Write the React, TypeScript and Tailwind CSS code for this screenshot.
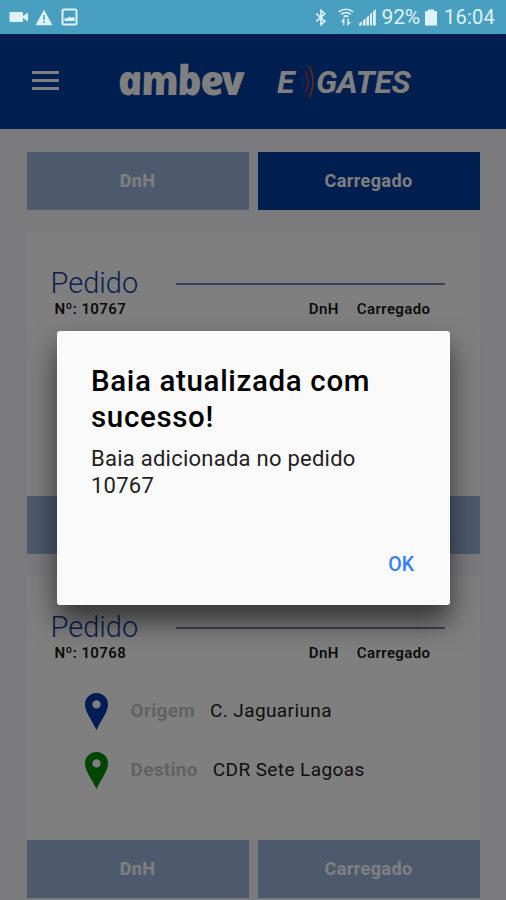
import { FC, ReactNode } from "react"
import clsx from "clsx"

type Place = {
  label: string
  name: string
  pinClass: string
}

type Order = {
  id: number
  places: Place[]
}

const orders: Order[] = [
  { id: 10767, places: [] },
  {
    id: 10768,
    places: [
      {
        label: "Origem",
        name: "C. Jaguariuna",
        pinClass: "text-[#0038a8]",
      },
      {
        label: "Destino",
        name: "CDR Sete Lagoas",
        pinClass: "text-[#008a00]",
      },
    ],
  },
]

const StatusBar: FC = () => (
  <div className="relative z-20 flex h-[34px] items-center bg-[#489fbf] text-[#e0f2f9]">
    <svg className="ml-[9px] h-4 w-5" viewBox="0 0 20 16" fill="currentColor">
      <rect x="0.5" y="3" width="13.5" height="10" rx="1" />
      <path d="M14 7l5-3.500v9l-5-3.500z" />
    </svg>
    <svg className="ml-[6px] h-[17px] w-[18px]" viewBox="0 0 18 17">
      <path d="M9 .8l8.500 15.400H.5z" fill="currentColor" />
      <path d="M9 6v5M9 12.300v1.700" stroke="#489fbf" strokeWidth="1.600" />
    </svg>
    <svg
      className="ml-[8px] h-[18px] w-[17px]"
      viewBox="0 0 17 18"
      fill="none"
      stroke="currentColor"
      strokeWidth="2"
    >
      <rect x="1.500" y="1.500" width="14" height="15" rx="1.500" />
      <path
        d="M3.500 13V10l2.500.4 2.500-2 1.500 1.400 3.500-.8v4z"
        fill="currentColor"
        stroke="none"
      />
    </svg>

    <div className="ml-auto flex items-center pr-[11px] font-['Roboto',sans-serif] text-[20px]">
      <svg
        className="mr-[11px] h-[17px] w-3"
        viewBox="0 0 12 18"
        fill="none"
        stroke="currentColor"
        strokeWidth="1.800"
      >
        <path d="M1 5l9 8-4 3.500v-15L10 5l-9 8" />
      </svg>
      <svg
        className="mr-[5px] h-[18px] w-[16px]"
        viewBox="0 0 16 18"
        fill="none"
        stroke="currentColor"
        strokeWidth="1.700"
      >
        <path d="M.8 3.800C5 .4 11 .4 15.200 3.800M3.300 6.300c2.700-2.300 6.700-2.300 9.400 0M5.700 8.800c1.400-1.200 3.200-1.200 4.600 0" />
        <path
          d="M5.500 17v-3.500h-2.200l2.700-3v6.500zM10.300 11v3.500h2.200l-2.700 3V11z"
          fill="currentColor"
          strokeWidth="0.800"
        />
      </svg>
      <svg className="h-[18px] w-[17px]" viewBox="0 0 17 18" fill="currentColor">
        <path d="M0 17.500v-2l3-2v4zM4 17.500v-5l2.500-2v7zM7.500 17.500v-8l2.500-2v10zM11 17.500V6l2-1.600v13.100zM14 17.500V3.500L16.800 1v16.500z" />
      </svg>
      <span className="ml-[6px] pt-[2px] text-[21px] tracking-[-0.2px]">92%</span>
      <svg className="ml-[5px] h-[17px] w-3" viewBox="0 0 12 17" fill="currentColor">
        <path d="M3 .5h6v1.500h3V16.500H0V2h3z" />
      </svg>
      <span className="ml-[7px] tracking-[0.25px]">16:04</span>
    </div>
  </div>
)

const Header: FC = () => (
  <header className="flex h-[95px] items-center bg-[#003ca0] text-white">
    <div className="mb-[3px] ml-8 flex w-[27px] flex-col gap-[5px]">
      <span className="h-[3px] bg-current" />
      <span className="h-[3px] bg-current" />
      <span className="h-[3px] bg-current" />
    </div>
    <span className="mb-[6px] ml-[58px] w-[127px] skew-x-[10deg] font-['Open_Sans',sans-serif] text-[41px] leading-[46px] font-extrabold tracking-[-1.8px] italic">
      ambev
    </span>
    <div className="ml-[33px] flex items-center font-['Roboto',sans-serif] text-[32px] leading-none font-bold italic">
      <span className="w-[22px]">E</span>
      <svg className="mr-[1px] h-[34px] w-[16px]" viewBox="0 0 16 34" fill="none">
        <path d="M3 11q2 6 0 12" stroke="#2c55ab" strokeWidth="1.200" />
        <path d="M6.500 6q5 11 0 22" stroke="#963a5a" strokeWidth="1.800" />
        <path d="M10 1q8 16 0 32" stroke="#a8583e" strokeWidth="1.800" />
      </svg>
      <span className="tracking-[-0.3px]">GATES</span>
    </div>
  </header>
)

const ActionButton: FC<{ active?: boolean; children: ReactNode }> = ({
  active = false,
  children,
}) => (
  <button
    type="button"
    className={clsx(
      "h-[58px] flex-1 pb-[2px] text-[18px] font-bold tracking-[0.4px] text-white",
      active ? "bg-[#003ca0]" : "bg-[#9bb5dc]"
    )}
  >
    {children}
  </button>
)

const Pin: FC<{ className: string }> = ({ className }) => (
  <svg
    className={clsx("h-[37px] w-[23px]", className)}
    viewBox="0 0 23 37"
    fill="currentColor"
    fillRule="evenodd"
  >
    <path d="M11.500 0A11.500 11.500 0 0 0 0 11.500C0 19 7.500 28 11.500 37 15.500 28 23 19 23 11.500A11.500 11.500 0 0 0 11.500 0zm0 7.200a4.200 4.200 0 1 1 0 8.400 4.200 4.200 0 0 1 0-8.400z" />
  </svg>
)

const OrderCard: FC<{ order: Order }> = ({ order }) => (
  <section className="flex h-[322px] flex-col bg-white">
    <div className="flex h-[61px] items-end pr-[35px] pl-[24px]">
      <h2 className="w-[125px] translate-y-px text-[29px] leading-[22px] font-light text-[#1c3f9e]">
        Pedido
      </h2>
      <span className="mb-[8px] h-[2px] flex-1 bg-[#7480b8]" />
    </div>
    <div className="mt-[6px] flex pr-[49px] pl-[28px] text-[15px] leading-[20px] font-semibold tracking-[0.4px] text-[#181818]">
      <span>Nº: {order.id}</span>
      <span className="ml-auto">DnH</span>
      <span className="ml-[18px]">Carregado</span>
    </div>
    <div className="mt-[30px] flex flex-col gap-[22px] pl-[58px]">
      {order.places.map(({ label, name, pinClass }) => (
        <div
          key={label}
          className="flex h-[37px] items-center text-[19px] tracking-[0.4px]"
        >
          <Pin className={pinClass} />
          <span className="ml-[23px] pb-[1px] font-bold tracking-[0.3px] text-[#c4c4c4]">
            {label}
          </span>
          <span className="ml-[15px] pb-[1px] text-[#1c1c1c]">{name}</span>
        </div>
      ))}
    </div>
    <div className="mt-auto flex gap-[9px] bg-[#f7f7fb]">
      <ActionButton>DnH</ActionButton>
      <ActionButton>Carregado</ActionButton>
    </div>
  </section>
)

const Dialog: FC = () => (
  <div className="absolute inset-0 z-10 bg-black/50">
    <div
      role="alertdialog"
      className="mt-[331px] ml-[57px] flex h-[274px] w-[393px] flex-col rounded-[3px] bg-[#fafafa] pr-9 pl-[34px] shadow-[0_16px_28px_rgba(0,0,0,0.6)]"
    >
      <h1 className="mt-[32px] text-[29.500px] leading-[36px] font-medium tracking-[0.65px] text-black">
        Baia atualizada com sucesso!
      </h1>
      <p className="mt-[11px] text-[22px] leading-[26.500px] tracking-[0.25px] text-[#222]">
        Baia adicionada no pedido 10767
      </p>
      <button
        type="button"
        className="mt-auto mb-[28px] self-end text-[19.500px] leading-6 font-medium text-[#327eff]"
      >
        OK
      </button>
    </div>
  </div>
)

export default function App() {
  return (
    <div className="relative h-[900px] w-[506px] overflow-hidden bg-[#f7f7fb] font-['Roboto',sans-serif]">
      <StatusBar />
      <Header />
      <main className="px-[26.500px] pt-[23px]">
        <div className="flex gap-[9px]">
          <ActionButton>DnH</ActionButton>
          <ActionButton active>Carregado</ActionButton>
        </div>
        <div className="mt-[22px] flex flex-col gap-[22px]">
          {orders.map((order) => (
            <OrderCard key={order.id} order={order} />
          ))}
        </div>
      </main>
      <Dialog />
    </div>
  )
}
